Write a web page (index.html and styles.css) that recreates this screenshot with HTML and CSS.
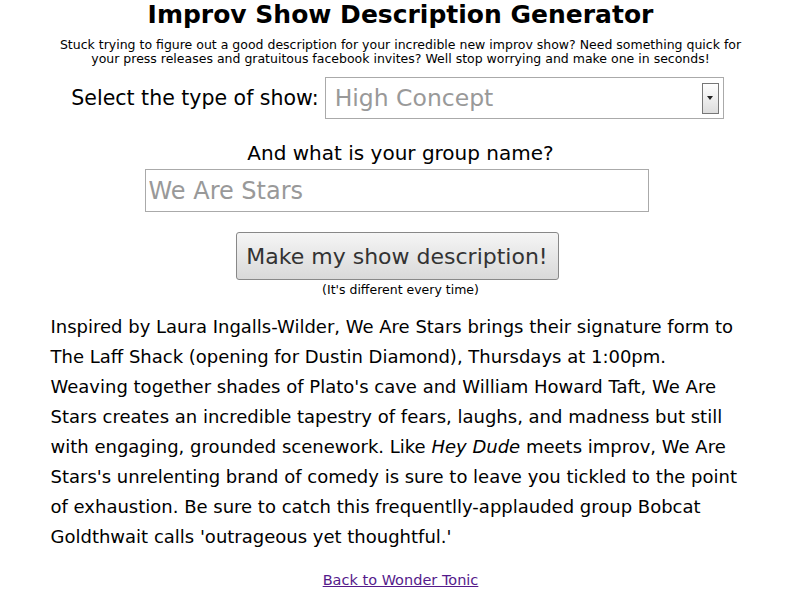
FILE: index.html
```html
<html>
<head>
    <title>Improv Show Description Generator</title>
    <link rel="stylesheet" href="styles.css">
</head>
<body>
    <div class="page">
        <h1 class="title">Improv Show Description Generator</h1>
        <p class="intro">Stuck trying to figure out a good description for your incredible new improv show? Need something quick for your press releases and gratuitous facebook invites? Well stop worrying and make one in seconds!</p>
        <form class="generator" onsubmit="return false">
            <div class="row">
                <label for="type">Select the type of show:</label>
                <div class="select-box">
                    <select id="type" name="type">
                        <option>High Concept</option>
                        <option>Longform</option>
                        <option>Shortform</option>
                    </select>
                    <span class="arrow"></span>
                </div>
            </div>
            <div class="group">
                <label for="group">And what is your group name?</label>
                <input type="text" id="group" name="group" value="We Are Stars">
            </div>
            <button class="button" type="submit">Make my show description!</button>
            <div class="hint">(It's different every time)</div>
        </form>
        <p class="result">Inspired by Laura Ingalls-Wilder, We Are Stars brings their signature form to<br>
            The Laff Shack (opening for Dustin Diamond), Thursdays at 1:00pm.<br>
            Weaving together shades of Plato's cave and William Howard Taft, We Are<br>
            Stars creates an incredible tapestry of fears, laughs, and madness but still<br>
            with engaging, grounded scenework. Like <em>Hey Dude</em> meets improv, We Are<br>
            Stars's unrelenting brand of comedy is sure to leave you tickled to the point<br>
            of exhaustion. Be sure to catch this frequentlly-applauded group Bobcat<br>
            Goldthwait calls 'outrageous yet thoughtful.'</p>
        <div class="back"><a href="#">Back to Wonder Tonic</a></div>
    </div>
</body>
</html>
```

FILE: styles.css
```css
body {
  margin: 0;
  background: #fff;
  color: #000;
  font-family: "DejaVu Sans", Verdana, sans-serif;
}
.page {
  width: 700px;
  margin: 0 auto;
  text-align: center;
}
.title {
  margin: 0;
  padding-top: 1px;
  font-size: 25px;
  font-weight: bold;
  line-height: 28px;
}
.intro {
  margin: 9px 0 0;
  font-size: 12.5px;
  line-height: 14px;
}
.generator {
  margin: 0;
}
.row {
  display: flex;
  justify-content: center;
  align-items: center;
  gap: 6px;
  margin-top: 11px;
  padding-right: 6px;
}
.row label {
  font-size: 20.5px;
}
.select-box {
  display: flex;
  align-items: center;
  width: 399px;
  height: 42px;
  border: 1px solid #aaa;
  padding-right: 4px;
  box-sizing: border-box;
}
.select-box select {
  flex: 1;
  border: none;
  outline: none;
  background: none;
  appearance: none;
  -webkit-appearance: none;
  color: #999;
  font-family: "DejaVu Sans", Verdana, sans-serif;
  font-size: 23.5px;
  padding: 0 0 0 9px;
}
.arrow {
  width: 15px;
  height: 29px;
  border: 1px solid #777;
  background: linear-gradient(#fff, #ddd);
  display: flex;
  align-items: center;
  justify-content: center;
}
.arrow::after {
  content: "";
  border-left: 3px solid transparent;
  border-right: 3px solid transparent;
  border-top: 4px solid #222;
}
.group {
  display: flex;
  flex-direction: column;
  align-items: center;
  margin-top: 22px;
}
.group label {
  font-size: 20px;
  line-height: 24px;
}
.group input {
  width: 504px;
  height: 43px;
  margin-top: 4px;
  margin-left: -8px;
  border: 1px solid #aaa;
  outline: none;
  color: #999;
  font-family: "DejaVu Sans", Verdana, sans-serif;
  font-size: 24px;
  padding: 0 3px;
  box-sizing: border-box;
}
.button {
  margin-top: 20px;
  margin-left: -7px;
  width: 323px;
  height: 48px;
  border: 1px solid #888;
  border-radius: 3px;
  background: linear-gradient(#f5f5f5, #d9d9d9);
  color: #333;
  font-family: "DejaVu Sans", Verdana, sans-serif;
  font-size: 22px;
  cursor: pointer;
}
.hint {
  font-size: 12.5px;
  line-height: 14px;
  margin-top: 3px;
}
.result {
  margin: 15px -20px 0 0;
  text-align: left;
  font-size: 18px;
  line-height: 30px;
}
.back {
  margin-top: 20px;
  font-size: 14.5px;
}
.back a {
  color: #551a8b;
}
```
